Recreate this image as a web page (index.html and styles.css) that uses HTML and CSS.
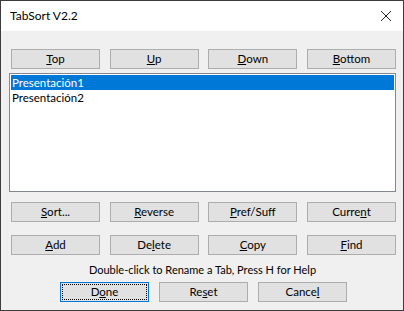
FILE: index.html
```html
<!DOCTYPE html>
<html lang="en">
<head>
    <meta charset="UTF-8">
    <title>TabSort V2.2</title>
    <link rel="stylesheet" href="styles.css">
</head>
<body>

    <div class="window">
        <div class="titlebar">
            <span class="title">TabSort V2.2</span>
            <svg class="close" width="12" height="12" viewBox="0 0 12 12">
                <path d="M1 1 L11 11 M11 1 L1 11" stroke="#222" stroke-width="1" fill="none"/>
            </svg>
        </div>

        <div class="content">
            <div class="row top-row">
                <button class="button"><u>T</u>op</button>
                <button class="button"><u>U</u>p</button>
                <button class="button"><u>D</u>own</button>
                <button class="button"><u>B</u>ottom</button>
            </div>

            <div class="listbox">
                <div class="item selected">Presentación1</div>
                <div class="item">Presentación2</div>
            </div>

            <div class="row sort-row">
                <button class="button"><u>S</u>ort...</button>
                <button class="button"><u>R</u>everse</button>
                <button class="button"><u>P</u>ref/Suff</button>
                <button class="button">Curre<u>n</u>t</button>
            </div>

            <div class="row edit-row">
                <button class="button"><u>A</u>dd</button>
                <button class="button">De<u>l</u>ete</button>
                <button class="button"><u>C</u>opy</button>
                <button class="button"><u>F</u>ind</button>
            </div>

            <div class="hint">Double-click to Rename a Tab, Press H for Help</div>

            <div class="row footer-row">
                <button class="button default"><span class="focus">D<u>o</u>ne</span></button>
                <button class="button">Re<u>s</u>et</button>
                <button class="button">Cance<u>l</u></button>
            </div>
        </div>
    </div>

</body>
</html>
```

FILE: styles.css
```css
body {
    margin: 0;
    font-family: Lato, "Noto Sans", sans-serif;
    font-size: 11px;
    color: #000;
    background-color: #f0f0f0;
}
.window {
    width: 404px;
    height: 311px;
    box-sizing: border-box;
    border: 1px solid #3c3c3c;
    display: flex;
    flex-direction: column;
}
.titlebar {
    height: 30px;
    background-color: #fff;
    display: flex;
    align-items: center;
    justify-content: space-between;
    padding: 0 11px 0 9px;
}
.title {
    font-size: 12px;
    line-height: 16px;
}
.close {
    display: block;
}
.content {
    flex: 1;
    background-color: #f0f0f0;
    padding: 18px 7px 0 8px;
}
.row {
    display: flex;
    justify-content: space-between;
    padding: 0 0 0 2px;
}
.button {
    width: 89px;
    height: 20px;
    padding: 0;
    margin: 0;
    border: 1px solid #adadad;
    background-color: #e1e1e1;
    font-family: inherit;
    font-size: 11.5px;
    line-height: 16px;
    color: #000;
}
.listbox {
    margin-top: 4px;
    height: 119px;
    box-sizing: border-box;
    border: 1px solid #828790;
    background-color: #fff;
    padding: 1px;
    font-size: 11.5px;
}
.item {
    height: 15px;
    line-height: 15px;
    padding-left: 1px;
}
.item.selected {
    background-color: #0078d7;
    color: #fff;
}
.sort-row {
    margin-top: 10px;
}
.edit-row {
    margin-top: 13px;
}
.hint {
    margin-top: 6px;
    text-align: center;
    line-height: 18px;
}
.footer-row {
    margin-top: 3px;
    justify-content: center;
    gap: 10px;
}
.button.default {
    border: 1px solid #0078d7;
    padding: 1px;
}
.focus {
    display: block;
    height: 16px;
    box-sizing: border-box;
    border: 1px dotted #000;
    line-height: 14px;
}
```
